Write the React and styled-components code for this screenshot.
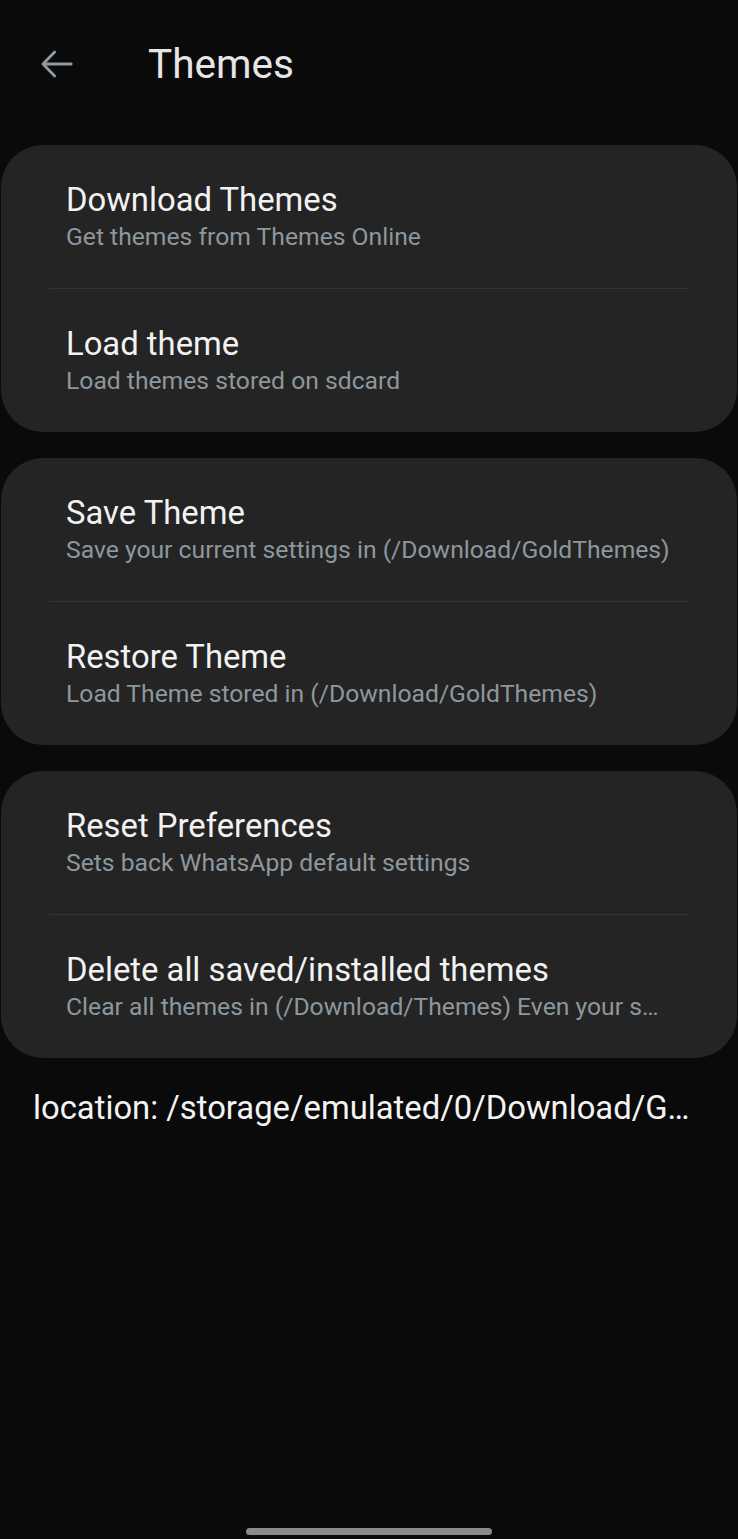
import React from "react";
import styled, { createGlobalStyle } from "styled-components";

const GlobalStyle = createGlobalStyle`
  html, body {
    margin: 0;
    padding: 0;
    background: #0a0a0a;
  }
  body {
    font-family: Roboto, "Noto Sans", "Liberation Sans", sans-serif;
  }
`;

// the device truncates the long lines, so they are kept as shown on screen
const groups = [
  [
    { title: "Download Themes", subtitle: "Get themes from Themes Online" },
    { title: "Load theme", subtitle: "Load themes stored on sdcard" },
  ],
  [
    {
      title: "Save Theme",
      subtitle: "Save your current settings in (/Download/GoldThemes)",
    },
    {
      title: "Restore Theme",
      subtitle: "Load Theme stored in (/Download/GoldThemes)",
    },
  ],
  [
    {
      title: "Reset Preferences",
      subtitle: "Sets back WhatsApp default settings",
    },
    {
      title: "Delete all saved/installed themes",
      subtitle: "Clear all themes in (/Download/Themes) Even your s…",
    },
  ],
];

const App = () => {
  return (
    <>
      <GlobalStyle />
      <Screen>
        <Toolbar>
          <BackButton aria-label="Back">
            <svg width="40" height="40" viewBox="0 0 24 24" fill="none">
              <path
                d="M20.5 12H3.8M10.6 4.8L3.6 12l7 7.2"
                stroke="currentColor"
                strokeWidth="1.7"
                strokeLinecap="round"
                strokeLinejoin="round"
              />
            </svg>
          </BackButton>
          <Title>Themes</Title>
        </Toolbar>
        <Content>
          {groups.map((items, gi) => (
            <Card key={gi}>
              {items.map((item, i) => (
                <Row key={item.title} divider={i > 0}>
                  <RowTitle>{item.title}</RowTitle>
                  <RowSubtitle>{item.subtitle}</RowSubtitle>
                </Row>
              ))}
            </Card>
          ))}
          <Location>location: /storage/emulated/0/Download/G…</Location>
        </Content>
        <HomeBar />
      </Screen>
    </>
  );
};

const Screen = styled.div`
  width: 738px;
  height: 1539px;
  background: #0a0a0a;
  display: flex;
  flex-direction: column;
  overflow: hidden;
`;

const Toolbar = styled.header`
  height: 128px;
  display: flex;
  align-items: center;
  padding: 0 0 0 37px;
  box-sizing: border-box;
`;

const BackButton = styled.div`
  width: 40px;
  height: 40px;
  color: #8c9ba5;
  display: flex;
  align-items: center;
  justify-content: center;
`;

const Title = styled.h1`
  margin: 0 0 0 71px;
  font-size: 40.5px;
  font-weight: 400;
  color: #e6e6e6;
`;

const Content = styled.main`
  flex: 1;
  display: flex;
  flex-direction: column;
  gap: 26px;
  padding-top: 17px;
`;

const Card = styled.section`
  margin: 0 1px;
  background: #242424;
  border-radius: 42px;
  display: flex;
  flex-direction: column;
`;

const Row = styled.div`
  height: 143px;
  margin: 0 48px;
  padding: 0 0 0 17px;
  display: flex;
  flex-direction: column;
  justify-content: center;
  gap: 3px;
  border-top: ${(props) => (props.divider ? "1px solid #343434" : "none")};
`;

const RowTitle = styled.div`
  font-size: 32.8px;
  line-height: 38px;
  color: #f2f2f2;
  white-space: nowrap;
`;

const RowSubtitle = styled.div`
  font-size: 24.7px;
  line-height: 30px;
  color: #8d979e;
  white-space: nowrap;
`;

const Location = styled.div`
  margin: 5px 0 0 33px;
  font-size: 32.8px;
  color: #f4f4f4;
  white-space: nowrap;
`;

const HomeBar = styled.div`
  align-self: center;
  width: 246px;
  height: 7px;
  border-radius: 4px;
  background: #8a8a8a;
  margin-bottom: 4px;
`;

export default App;
